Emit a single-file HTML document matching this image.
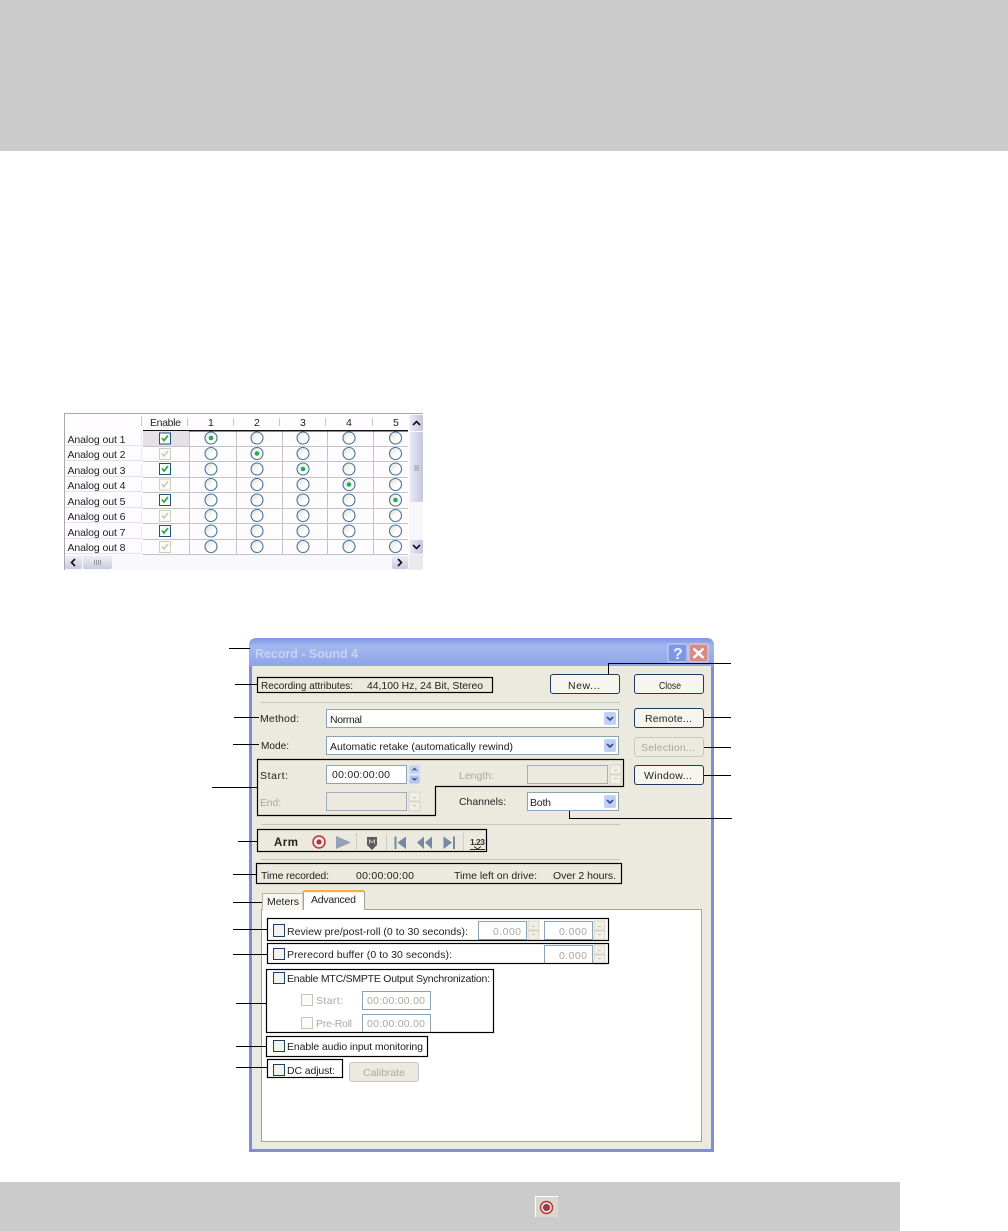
<!DOCTYPE html>
<html><head><meta charset="utf-8"><title>Record</title>
<style>
html,body{margin:0;padding:0;background:#fff}
svg{display:block}
text{font-family:"Liberation Sans",sans-serif;font-size:10.5px;fill:#222}
.d{fill:#a9a9a0}
.b{fill:none;stroke:#000;stroke-width:1.2}
.l{stroke:#000;stroke-width:1;fill:none}
.btn{fill:#f6f5ee;stroke:#1f3a5c;stroke-width:1}
.dbtn{fill:#ece9de;stroke:#c9c7ba;stroke-width:1}
.f{fill:#fff;stroke:#8aa5b8;stroke-width:1}
.df{fill:#ece9de;stroke:#9fb0ba;stroke-width:1}
.sep{stroke:#c9c6b6;stroke-width:1}
.cb{fill:#f4f3ee;stroke:#1f3f5f;stroke-width:1}
.dcb{fill:#fbfbf8;stroke:#c6c4b6;stroke-width:1}
.g{stroke:#c4c4c4;stroke-width:1}
</style></head><body>
<svg xmlns="http://www.w3.org/2000/svg" width="1008" height="1231" viewBox="0 0 1008 1231">
<defs>
<linearGradient id="tb" x1="0" y1="0" x2="0" y2="1"><stop offset="0" stop-color="#7f96e6"/><stop offset=".3" stop-color="#a4b7ee"/><stop offset="1" stop-color="#8ea4e8"/></linearGradient>
<linearGradient id="sb" x1="0" y1="0" x2="1" y2="0"><stop offset="0" stop-color="#e8e9f5"/><stop offset="1" stop-color="#c3c6de"/></linearGradient>
<linearGradient id="sh" x1="0" y1="0" x2="0" y2="1"><stop offset="0" stop-color="#eeeef8"/><stop offset="1" stop-color="#c8cbe0"/></linearGradient>
<linearGradient id="rg" x1="0" y1="0" x2="1" y2="1"><stop offset="0" stop-color="#dcdcd6"/><stop offset=".6" stop-color="#fff"/></linearGradient>
<g id="r"><circle r="6" fill="url(#rg)" stroke="#45749c" stroke-width="1.1"/></g>
<g id="ro"><circle r="6" fill="url(#rg)" stroke="#45749c" stroke-width="1.1"/><circle r="2.3" fill="#22b04a"/></g>
<g id="c1"><rect x="-5.5" y="-5.5" width="11" height="11" fill="#fbfbf8" stroke="#1c5180" stroke-width="1"/><path d="M-3 -.5L-1 2L3 -3" fill="none" stroke="#22a83c" stroke-width="1.7"/></g>
<g id="c2"><rect x="-5.5" y="-5.5" width="11" height="11" fill="#fbfbf8" stroke="#cfcdc0" stroke-width="1"/><path d="M-3 -.5L-1 2L3 -3" fill="none" stroke="#c9c7ba" stroke-width="1.5"/></g>
<g id="ar"><rect width="12" height="13" rx="2" fill="#c3d0f5"/><path d="M3 5l3 3l3-3" fill="none" stroke="#3a4f90" stroke-width="1.8"/></g>
<g id="sp"><rect width="11" height="9" fill="#c3d0f0" stroke="#e8e8f0"/><rect y="10" width="11" height="9" fill="#b4c4ee" stroke="#e8e8f0"/><path d="M3.500 5.500L5.500 3.500L7.500 5.500M3.500 13L5.500 15L7.500 13" fill="none" stroke="#1f3570"/></g>
<g id="dsp"><rect width="11" height="9" fill="#f1efe4" stroke="#d8d6c8"/><rect y="10" width="11" height="9" fill="#f1efe4" stroke="#d8d6c8"/><path d="M4 5.500h3M4 13.500h3" stroke="#c5c3b6"/></g>
</defs>
<rect width="1008" height="1231" fill="#fff"/>
<rect width="1008" height="151" fill="#cbcbcb"/>
<rect y="1182" width="900" height="49" fill="#cbcbcb"/>
<rect x="535" y="1196" width="23" height="21" fill="#dad7cd"/>
<path d="M535.500 1217V1196.500H558" fill="none" stroke="#fff"/>
<circle cx="546.500" cy="1207.500" r="6" fill="#e6e2dc" stroke="#c62a3c" stroke-width="1.400"/><circle cx="546.500" cy="1207.500" r="3" fill="#b8324a" stroke="#333" stroke-width=".8"/>

<!-- table -->
<rect x="64" y="413" width="359" height="157" fill="#fefcff"/>
<path d="M64.500 570V413.500H423" fill="none" stroke="#a8a8a8"/>
<g class="g">
<path d="M143 446.500H408M143 461.500H408M143 477.500H408M143 492.500H408M143 508.500H408M143 523.500H408M143 539.500H408M143 554.500H408" fill="none"/>
<path d="M189.500 431V554M236.500 431V554M282.500 431V554M327.500 431V554M373.500 431V554" fill="none"/>
<path d="M65 445.500H143M65 460.500H143M65 476.500H143M65 491.500H143M65 507.500H143M65 522.500H143M65 538.500H143M65 553.500H143" fill="none" style="stroke:#e2e2ea"/>
<path d="M141.500 416V426M187.500 418V426M233.500 418V426M279.500 418V426M325.500 418V426M372.500 418V426" fill="none" style="stroke:#c8c8c8"/>
<path d="M141.500 434V444M141.500 449V459M141.500 465V475M141.500 480V490M141.500 496V506M141.500 511V521M141.500 527V537M141.500 542V552" fill="none" style="stroke:#e6e6ea"/>
</g>
<rect x="143" y="430" width="265" height="1.500" fill="#111"/>
<rect x="143" y="431" width="46" height="15" fill="#e4e1e6"/>
<text x="150" y="426" textLength="31">Enable</text>
<text x="208" y="426">1</text><text x="254" y="426">2</text><text x="300" y="426">3</text><text x="346" y="426">4</text><text x="393" y="426">5</text>
<text x="67.500" y="443" textLength="58">Analog out 1</text>
<text x="67.500" y="458" textLength="58">Analog out 2</text>
<text x="67.500" y="474" textLength="58">Analog out 3</text>
<text x="67.500" y="489" textLength="58">Analog out 4</text>
<text x="67.500" y="505" textLength="58">Analog out 5</text>
<text x="67.500" y="520" textLength="58">Analog out 6</text>
<text x="67.500" y="536" textLength="58">Analog out 7</text>
<text x="67.500" y="551" textLength="58">Analog out 8</text>
<use href="#c1" x="165" y="438.500"/><use href="#c2" x="165" y="454"/><use href="#c1" x="165" y="469"/><use href="#c2" x="165" y="484.500"/><use href="#c1" x="165" y="500"/><use href="#c2" x="165" y="516"/><use href="#c1" x="165" y="531"/><use href="#c2" x="165" y="547"/>
<use href="#ro" x="211" y="438"/><use href="#r" x="257" y="438"/><use href="#r" x="303" y="438"/><use href="#r" x="349" y="438"/><use href="#r" x="395.500" y="438"/>
<use href="#r" x="211" y="453.500"/><use href="#ro" x="257" y="453.500"/><use href="#r" x="303" y="453.500"/><use href="#r" x="349" y="453.500"/><use href="#r" x="395.500" y="453.500"/>
<use href="#r" x="211" y="469"/><use href="#r" x="257" y="469"/><use href="#ro" x="303" y="469"/><use href="#r" x="349" y="469"/><use href="#r" x="395.500" y="469"/>
<use href="#r" x="211" y="484.500"/><use href="#r" x="257" y="484.500"/><use href="#r" x="303" y="484.500"/><use href="#ro" x="349" y="484.500"/><use href="#r" x="395.500" y="484.500"/>
<use href="#r" x="211" y="500"/><use href="#r" x="257" y="500"/><use href="#r" x="303" y="500"/><use href="#r" x="349" y="500"/><use href="#ro" x="395.500" y="500"/>
<use href="#r" x="211" y="515.500"/><use href="#r" x="257" y="515.500"/><use href="#r" x="303" y="515.500"/><use href="#r" x="349" y="515.500"/><use href="#r" x="395.500" y="515.500"/>
<use href="#r" x="211" y="531"/><use href="#r" x="257" y="531"/><use href="#r" x="303" y="531"/><use href="#r" x="349" y="531"/><use href="#r" x="395.500" y="531"/>
<use href="#r" x="211" y="546.500"/><use href="#r" x="257" y="546.500"/><use href="#r" x="303" y="546.500"/><use href="#r" x="349" y="546.500"/><use href="#r" x="395.500" y="546.500"/>
<rect x="409" y="414" width="14" height="141" fill="#f7f6fb"/>
<rect x="65" y="555" width="344" height="15" fill="#f8f7fb"/>
<rect x="409" y="555" width="14" height="15" fill="#ece9ee"/>
<rect x="410" y="415" width="13" height="16" rx="2" fill="url(#sb)"/><path d="M413 425l3.500-3.500l3.500 3.500" fill="none" stroke="#111" stroke-width="1.600"/>
<rect x="410" y="432" width="13" height="70" rx="2" fill="url(#sb)"/><path d="M414 466h5M414 468h5M414 470h5" stroke="#9a9a9a"/>
<rect x="410" y="540" width="13" height="14" rx="2" fill="url(#sb)"/><path d="M413 545l3.500 3.500l3.500-3.500" fill="none" stroke="#111" stroke-width="1.600"/>
<rect x="65" y="556" width="17" height="13" rx="2" fill="url(#sh)"/><path d="M75 559l-3.500 3.500l3.500 3.500" fill="none" stroke="#111" stroke-width="1.600"/>
<rect x="83" y="556" width="29" height="13" rx="2" fill="url(#sh)"/><path d="M94.500 560v5M96.500 560v5M98.500 560v5M100.500 560v5" stroke="#9a9a9a"/>
<rect x="392" y="556" width="16" height="13" rx="2" fill="url(#sh)"/><path d="M398 559l3.500 3.500l-3.500 3.500" fill="none" stroke="#111" stroke-width="1.600"/>

<!-- dialog -->
<path d="M249 1152V646q0-8 8-8H706q8 0 8 8V1152Z" fill="#7f8edb"/>
<rect x="252" y="666" width="459" height="483" fill="#ece9de"/>
<path d="M249 666V646q0-8 8-8H706q8 0 8 8V666Z" fill="url(#tb)"/>
<rect x="608" y="663" width="106" height="3" fill="#8ea4e8"/>
<text x="255" y="658" textLength="103" style="font-size:12.500px;font-weight:bold;fill:#c6d3f5">Record - Sound 4</text>
<rect x="668" y="644" width="19" height="18" rx="2" fill="#7d97e8" stroke="#cfd9f7"/>
<text x="673" y="659" style="font-size:16px;font-weight:bold;fill:#eef2ff">?</text>
<rect x="689" y="644" width="19" height="18" rx="2" fill="#d98a88" stroke="#eed5d5"/>
<path d="M693.500 648.500l10 9.500M703.500 648.500l-10 9.500" stroke="#fff" stroke-width="2.400"/>

<!-- buttons -->
<rect x="550.500" y="674.500" width="69" height="19" rx="2.500" class="btn"/><text x="568" y="689" textLength="32">New...</text>
<rect x="634.500" y="674.500" width="69" height="19" rx="2.500" class="btn"/><text x="659" y="689" textLength="22" lengthAdjust="spacingAndGlyphs">Close</text>
<rect x="634.500" y="708.500" width="69" height="19" rx="2.500" class="btn"/><text x="645" y="722" textLength="47">Remote...</text>
<rect x="634.500" y="737.500" width="69" height="19" rx="2.500" class="dbtn"/><text x="641" y="751" textLength="54" class="d">Selection...</text>
<rect x="634.500" y="765.500" width="69" height="19" rx="2.500" class="btn"/><text x="644" y="779" textLength="48">Window...</text>

<path d="M261 702.500H620M261 824.500H620M261 859.500H620" class="sep"/>

<text x="261" y="689" textLength="92" lengthAdjust="spacingAndGlyphs">Recording attributes:</text>
<text x="367" y="689" textLength="116" lengthAdjust="spacingAndGlyphs">44,100 Hz, 24 Bit, Stereo</text>
<text x="260" y="722" textLength="39">Method:</text>
<text x="261" y="749" textLength="28" lengthAdjust="spacingAndGlyphs">Mode:</text>

<rect x="326.500" y="709.500" width="292" height="18" class="f"/><text x="330" y="723" textLength="32">Normal</text><use href="#ar" x="604" y="712"/>
<rect x="326.500" y="736.500" width="292" height="18" class="f"/><text x="330" y="750" textLength="183" lengthAdjust="spacingAndGlyphs">Automatic retake (automatically rewind)</text><use href="#ar" x="604" y="739"/>

<text x="260" y="779" textLength="28">Start:</text>
<rect x="326.500" y="765.500" width="80" height="18" class="f"/><text x="332" y="778" textLength="58">00:00:00:00</text><use href="#sp" x="409" y="765"/>
<text x="260" y="806" textLength="21" class="d">End:</text>
<rect x="326.500" y="792.500" width="80" height="18" class="df"/><use href="#dsp" x="409" y="792"/>
<text x="459" y="779" textLength="35" class="d">Length:</text>
<rect x="527.500" y="765.500" width="80" height="18" class="df"/><use href="#dsp" x="610" y="765"/>
<text x="459" y="805" textLength="47">Channels:</text>
<rect x="527.500" y="792.500" width="91" height="18" class="f"/><text x="530" y="806" textLength="21">Both</text><use href="#ar" x="604" y="795"/>

<!-- transport -->
<text x="274" y="846" textLength="24" style="font-size:11.500px;font-weight:bold;fill:#222">Arm</text>
<circle cx="319" cy="842" r="6" fill="#e9e6dc" stroke="#c2303f" stroke-width="1.500"/><circle cx="319" cy="842" r="2.500" fill="#a83048"/>
<path d="M336 836L351 842.500L336 849Z" fill="#94a3b4"/>
<path d="M356.500 833V851M386.500 833V851M463.500 833V851" stroke="#d2cfc0"/>
<path d="M367 837H377V845L372 850L367 845Z" fill="#5c5c5c"/><path d="M369.500 844V840L372 842.500L374.500 840V844" fill="none" stroke="#ddd" stroke-width=".8"/>
<path d="M395.500 836.500V849" stroke="#7689a0" stroke-width="2"/><path d="M406 836.500V849L397.500 842.500Z" fill="#7689a0"/>
<path d="M424 836.500V849L417 842.500ZM432 836.500V849L425 842.500Z" fill="#7689a0"/>
<path d="M443.500 836.500V849L452 842.500Z" fill="#7689a0"/><path d="M454 836.500V849" stroke="#7689a0" stroke-width="2"/>
<text x="470" y="845" textLength="15" style="font-size:8.500px;font-weight:bold;fill:#333">1.23</text>
<path d="M470 849.500H485" stroke="#333"/><path d="M474 846.500l3.500 2.500l3.500-2.500" fill="none" stroke="#333"/>

<text x="261" y="879" textLength="68">Time recorded:</text>
<text x="356" y="879" textLength="58">00:00:00:00</text>
<text x="454" y="879" textLength="83">Time left on drive:</text>
<text x="553" y="879" textLength="63">Over 2 hours.</text>

<!-- tabs -->
<rect x="261.500" y="909.500" width="440" height="232" fill="#fff" stroke="#a4a294"/>
<path d="M262.500 910V893.500H303V910" fill="#f7f6ef" stroke="#b6b4a4"/>
<path d="M303.500 910V891.500H364.500V910" fill="#fff" stroke="#a4a294"/>
<rect x="304" y="910" width="60" height="1.500" fill="#fff"/>
<rect x="304" y="890" width="60" height="2.200" fill="#f1b13e"/>
<text x="267" y="905" textLength="32">Meters</text>
<text x="311" y="903" textLength="45">Advanced</text>

<rect x="273.500" y="924.500" width="11" height="12" class="cb"/>
<text x="287" y="935" textLength="181">Review pre/post-roll (0 to 30 seconds):</text>
<rect x="478.500" y="921.500" width="48" height="18" class="f"/><text x="493" y="935" textLength="28" class="d">0.000</text><use href="#dsp" x="528" y="921"/>
<rect x="544.500" y="921.500" width="48" height="18" class="f"/><text x="559" y="935" textLength="28" class="d">0.000</text><use href="#dsp" x="594" y="921"/>

<rect x="273.500" y="948.500" width="11" height="11" class="cb"/>
<text x="287" y="958" textLength="165">Prerecord buffer (0 to 30 seconds):</text>
<rect x="544.500" y="945.500" width="48" height="18" class="f"/><text x="559" y="959" textLength="28" class="d">0.000</text><use href="#dsp" x="594" y="945"/>

<rect x="273.500" y="972.500" width="11" height="11" class="cb"/>
<text x="287" y="982" textLength="203">Enable MTC/SMPTE Output Synchronization:</text>
<rect x="301.500" y="994.500" width="11" height="11" class="dcb"/>
<text x="316" y="1004" textLength="27" class="d">Start:</text>
<rect x="362.500" y="991.500" width="68" height="18" class="f"/><text x="367" y="1004" textLength="58" class="d">00:00:00.00</text>
<rect x="301.500" y="1017.500" width="11" height="11" class="dcb"/>
<text x="316" y="1027" textLength="36" class="d">Pre-Roll</text>
<rect x="362.500" y="1014.500" width="68" height="18" class="f"/><text x="367" y="1027" textLength="58" class="d">00:00:00.00</text>

<rect x="273.500" y="1040.500" width="11" height="11" class="cb"/>
<text x="287" y="1050" textLength="136">Enable audio input monitoring</text>
<rect x="273.500" y="1064.500" width="11" height="11" class="cb"/>
<text x="287" y="1074" textLength="48">DC adjust:</text>
<rect x="349.500" y="1062.500" width="69" height="19" rx="2.500" class="dbtn"/><text x="363" y="1076" textLength="42" class="d">Calibrate</text>

<!-- callout boxes -->
<rect x="257.500" y="677.500" width="235" height="15" class="b"/>
<path d="M257.500 759.500H623.500V786.500H435.500V815.500H257.500Z" class="b"/>
<rect x="257.500" y="829.500" width="229" height="22" class="b"/>
<rect x="256.500" y="863.500" width="365" height="20" class="b"/>
<rect x="267.500" y="918.500" width="341" height="22" class="b"/>
<rect x="267.500" y="943.500" width="341" height="20" class="b"/>
<rect x="266.500" y="969.500" width="227" height="63" class="b"/>
<rect x="266.500" y="1036.500" width="161" height="20" class="b"/>
<rect x="267.500" y="1059.500" width="75" height="18" class="b"/>

<!-- callout lines -->
<path class="l" d="M229 648.500H250M235 684.500H257M234 717.500H259M233 744.500H259M212 787.500H257M238 841.500H257M233 874.500H256M233 902.500H262M233 929.500H267M233 954.500H267M236 1003.500H266M236 1046.500H266M236 1067.500H267"/>
<path class="l" d="M608.500 674V663.500H731M704 717.500H731M704 747.500H731M704 775.500H731M569.500 811V818.500H732"/>
</svg>
</body></html>
